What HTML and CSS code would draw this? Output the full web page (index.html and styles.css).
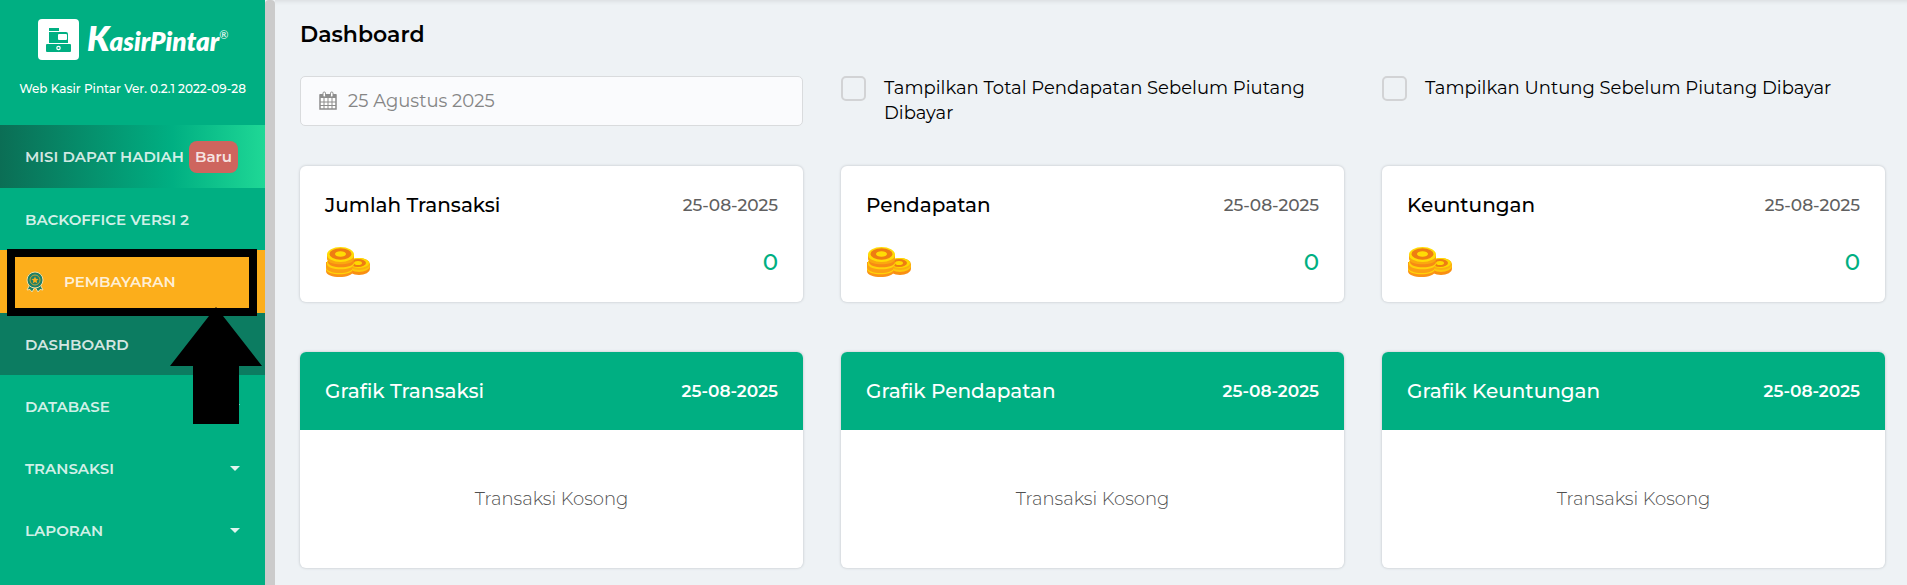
FILE: index.html
```
<!DOCTYPE html>
<html lang="id">
<head>
  <meta charset="UTF-8" />
  <meta name="viewport" content="width=device-width, initial-scale=1" />
  <title>Kasir Pintar - Dashboard</title>
  <link rel="stylesheet" href="styles.css">
</head>
<body>
  <svg class="defs" width="0" height="0" aria-hidden="true">
    <symbol id="coins" viewBox="0 0 46 32">
      <ellipse cx="34" cy="23" rx="11" ry="6" fill="#f98f12" />
      <path d="M23 18h22v5H23z" fill="#fb9a14" />
      <ellipse cx="34" cy="20" rx="11" ry="6" fill="#fdc70c" />
      <ellipse cx="34" cy="18" rx="11" ry="6" fill="#fbb010" />
      <ellipse cx="34" cy="17" rx="10" ry="5" fill="#ffd800" />
      <ellipse cx="33" cy="17" rx="8" ry="4" fill="#ee7d12" />
      <ellipse cx="33" cy="17" rx="4" ry="2" fill="#ffd800" />
      <path d="M1 20v5c0 8 27 8 27 0v-5z" fill="#fb9416" />
      <path d="M1 20v3c0 7 27 7 27 0v-3z" fill="#ffd20a" />
      <path d="M1 16v5c0 8 27 8 27 0v-5z" fill="#fba013" />
      <path d="M2 15v3c0 7 27 7 27 0v-3z" fill="#ffd20a" />
      <path d="M3 11v5c0 7 26 7 26 0v-5z" fill="#f78a15" />
      <path d="M2 8v5c0 7 27 7 27 0V8z" fill="#fba70f" />
      <ellipse cx="15.500" cy="8.500" rx="13.500" ry="7.500" fill="#ffdc05" />
      <ellipse cx="15.500" cy="8" rx="11" ry="5.800" fill="#ee7d12" />
      <ellipse cx="15.500" cy="8" rx="5.500" ry="2.800" fill="#ffdc05" />
    </symbol>
  </svg>

  <div class="layout">
    <aside class="sidebar">
      <div class="brand">
        <div class="logo">
          <svg class="logo-icon" viewBox="0 0 41 41" aria-hidden="true">
            <rect width="41" height="41" rx="4" fill="#fff" />
            <path d="M11 9h10v3H11z" fill="#00af82" />
            <path d="M11 13h17q2 0 2 2v9H11z" fill="#00af82" />
            <rect x="20" y="15" width="9" height="6" rx="1" fill="#fff" />
            <rect x="8" y="25" width="25" height="8" rx="1" fill="#00af82" />
            <circle cx="20.500" cy="29" r="1.700" fill="none" stroke="#fff" stroke-width="1.200" />
          </svg>
          <div class="logo-text"><span class="logo-k">K</span>asirPintar<sup>®</sup></div>
        </div>
        <p class="version">Web Kasir Pintar Ver. 0.2.1 2022-09-28</p>
      </div>

      <nav class="menu">
        <a href="#" class="menu-item mission"><span>MISI DAPAT HADIAH</span><span class="badge">Baru</span></a>
        <a href="#" class="menu-item">BACKOFFICE VERSI 2</a>
        <a href="#" class="menu-item payment">
          <svg class="medal" viewBox="0 0 20 22" aria-hidden="true">
            <path d="M5 13L2 19l3-.500L7 21l3-5 3 5 2-2.500 3 .500-3-6z" fill="#1c8067" stroke="#f7dda0" />
            <circle cx="10" cy="9" r="8" fill="#1c8067" stroke="#f7dda0" />
            <circle cx="10" cy="9" r="5" fill="none" stroke="#c6a638" />
            <path d="M10 5.500l1 2.300 2.500.200-1.900 1.700.600 2.500-2.200-1.300-2.200 1.300.600-2.500L6.500 8l2.500-.200z" fill="#fcae1b" />
          </svg>
          <span>PEMBAYARAN</span>
        </a>
        <a href="#" class="menu-item active">DASHBOARD</a>
        <a href="#" class="menu-item">DATABASE <span class="caret"></span></a>
        <a href="#" class="menu-item">TRANSAKSI <span class="caret"></span></a>
        <a href="#" class="menu-item">LAPORAN <span class="caret"></span></a>
      </nav>

      <!-- penanda menu pembayaran -->
      <svg class="pointer" width="258" height="176" viewBox="0 0 258 176" aria-hidden="true">
        <rect x="4" y="4" width="242" height="59" fill="none" stroke="#000" stroke-width="8" />
        <path d="M209 58l46 59h-23v58h-46v-58h-23z" fill="#000" />
      </svg>
    </aside>
    <div class="scrollbar"></div>

    <main class="content">
      <h1>Dashboard</h1>

      <div class="grid filters">
        <div class="date-field">
          <svg viewBox="0 0 18 20" aria-hidden="true">
            <path d="M1 4h16v14H1z" fill="#fff" stroke="#8d8d8d" stroke-width="1.500" />
            <path d="M1 3h16v4H1z" fill="#8d8d8d" />
            <path d="M1 11h16M1 14.500h16M5 7v11M9 7v11M13 7v11" stroke="#8d8d8d" />
            <rect x="4" y="1" width="2.500" height="5" rx="1.200" fill="#fff" stroke="#8d8d8d" />
            <rect x="11.500" y="1" width="2.500" height="5" rx="1.200" fill="#fff" stroke="#8d8d8d" />
          </svg>
          <input type="text" id="date" aria-label="Tanggal" value="25 Agustus 2025" />
        </div>
        <div class="check">
          <input type="checkbox" id="showIncome" />
          <label for="showIncome">Tampilkan Total Pendapatan Sebelum Piutang Dibayar</label>
        </div>
        <div class="check">
          <input type="checkbox" id="showProfit" />
          <label for="showProfit">Tampilkan Untung Sebelum Piutang Dibayar</label>
        </div>
      </div>

      <div class="grid stats">
        <section class="card stat">
          <div class="row"><h2>Jumlah Transaksi</h2><span class="date">25-08-2025</span></div>
          <div class="row"><svg class="coins"><use href="#coins" /></svg><span class="value">0</span></div>
        </section>
        <section class="card stat">
          <div class="row"><h2>Pendapatan</h2><span class="date">25-08-2025</span></div>
          <div class="row"><svg class="coins"><use href="#coins" /></svg><span class="value">0</span></div>
        </section>
        <section class="card stat">
          <div class="row"><h2>Keuntungan</h2><span class="date">25-08-2025</span></div>
          <div class="row"><svg class="coins"><use href="#coins" /></svg><span class="value">0</span></div>
        </section>
      </div>

      <div class="grid">
        <section class="card">
          <div class="row chart-head"><h2>Grafik Transaksi</h2><span class="date">25-08-2025</span></div>
          <p class="empty">Transaksi Kosong</p>
        </section>
        <section class="card">
          <div class="row chart-head"><h2>Grafik Pendapatan</h2><span class="date">25-08-2025</span></div>
          <p class="empty">Transaksi Kosong</p>
        </section>
        <section class="card">
          <div class="row chart-head"><h2>Grafik Keuntungan</h2><span class="date">25-08-2025</span></div>
          <p class="empty">Transaksi Kosong</p>
        </section>
      </div>
    </main>
  </div>
</body>
</html>
```
FILE: styles.css
```
* {
  box-sizing: border-box;
}

body {
  margin: 0;
  background: #eef2f5;
  font-family: Montserrat, Inter, "Open Sans", sans-serif;
  font-size: 18px;
  color: #000;
}

h1, h2, p {
  margin: 0;
  font-weight: 500;
}

.defs {
  position: absolute;
}

.layout {
  display: flex;
  min-height: 100vh;
}

/* Sidebar */
.sidebar {
  position: relative;
  flex: 0 0 265px;
  background: #00af82;
  color: #fff;
}

.brand {
  height: 125px;
  padding-top: 19px;
}

.logo {
  display: flex;
  align-items: center;
  gap: 8px;
  height: 41px;
  padding-left: 38px;
}

.logo-icon {
  width: 41px;
  height: 41px;
}

.logo-text {
  font-family: Lato, sans-serif;
  font-size: 26px;
  font-weight: 800;
  font-style: italic;
  line-height: 41px;
  white-space: nowrap;
}

.logo-k {
  font-size: 34px;
}

.logo-text sup {
  font-size: 11px;
  font-weight: 400;
  font-style: normal;
  line-height: 0;
  vertical-align: 12px;
}

.version {
  margin-top: 19px;
  font-size: 12px;
  font-weight: 500;
  line-height: 20px;
  text-align: center;
  white-space: nowrap;
}

.menu-item {
  display: flex;
  align-items: center;
  height: 62px;
  padding: 0 25px;
  color: rgba(255, 255, 255, 0.84);
  font-size: 15px;
  font-weight: 600;
  text-decoration: none;
  white-space: nowrap;
}

.mission {
  gap: 5px;
  height: 63px;
  background: linear-gradient(90deg, #0b6e55, #00af82 65%, #1fd896);
}

.badge {
  padding: 0 6px;
  border-radius: 8px;
  background: #ce655e;
  line-height: 32px;
}

.payment {
  gap: 19px;
  height: 63px;
  background: #fcae1b;
}

.medal {
  width: 20px;
  height: 22px;
}

.active {
  background: #0c7c61;
}

.caret {
  margin-left: auto;
  border: 5px solid transparent;
  border-top-color: #e0f5ef;
  border-bottom: 0;
}

.pointer {
  position: absolute;
  top: 249px;
  left: 7px;
}

.scrollbar {
  flex: 0 0 10px;
  border-radius: 4px 4px 0 0;
  background: #cbcbcb;
}

/* Content */
.content {
  flex: 1;
  min-width: 0;
  padding: 20px 22px 16px 25px;
  box-shadow: inset 0 5px 5px -4px rgba(0, 0, 0, 0.1);
}

h1 {
  margin-bottom: 26px;
  font-size: 22px;
  font-weight: 600;
  line-height: 30px;
}

.grid {
  display: grid;
  grid-template-columns: repeat(3, 1fr);
  gap: 38px;
}

.filters {
  align-items: start;
  margin-bottom: 40px;
}

.date-field {
  display: flex;
  align-items: center;
  gap: 11px;
  height: 50px;
  padding: 0 18px;
  border: 1px solid #d9dbdd;
  border-radius: 5px;
  background: #fafbfd;
}

.date-field svg {
  width: 18px;
  height: 20px;
}

.date-field input {
  flex: 1;
  min-width: 0;
  padding: 0;
  border: 0;
  outline: 0;
  background: none;
  color: #858585;
  font: inherit;
}

.check {
  display: flex;
  gap: 18px;
}

.check input {
  appearance: none;
  flex: 0 0 25px;
  height: 25px;
  margin: 0;
  border: 2px solid #d2d3d5;
  border-radius: 5px;
}

.check label {
  line-height: 25px;
}

.card {
  overflow: hidden;
  border-radius: 6px;
  background: #fff;
  box-shadow: 0 0 2px 1px #d6dade;
}

.row {
  display: flex;
  justify-content: space-between;
  align-items: center;
}

h2 {
  font-size: 20px;
  line-height: 28px;
}

.stats {
  margin-bottom: 50px;
}

.stat {
  display: grid;
  gap: 27px;
  padding: 25px 25px 24px;
}

.date {
  color: #606060;
  font-size: 17px;
  font-weight: 500;
}

.coins {
  width: 46px;
  height: 32px;
}

.value {
  color: #00af82;
  font-size: 23px;
  font-weight: 500;
}

.chart-head {
  padding: 25px;
  background: #00af82;
  color: #fff;
}

.chart-head .date {
  color: #fff;
  font-weight: 600;
}

.empty {
  padding: 55px 25px;
  color: #505050;
  font-weight: 300;
  line-height: 28px;
  text-align: center;
}
```
